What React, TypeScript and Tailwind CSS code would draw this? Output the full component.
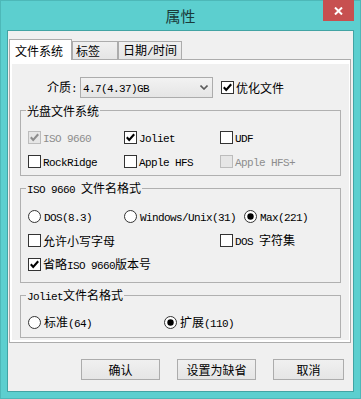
import React from 'react';

const CJK = "font-['Noto_Sans_CJK_SC',sans-serif] text-[12px]";
const MONO = "font-['Liberation_Mono',monospace] text-[11px] tracking-[-0.6px]";

function Txt({ s, className = '' }: { s: string; className?: string }) {
  const parts = s.split(/([\u4e00-\u9fff]+)/).filter(Boolean);
  return (
    <span className={'whitespace-pre leading-[14px] ' + className}>
      {parts.map((p, i) =>
        /[\u4e00-\u9fff]/.test(p) ? (
          <span key={i} className={CJK}>
            {p}
          </span>
        ) : (
          <span key={i} className={MONO}>
            {p}
          </span>
        )
      )}
    </span>
  );
}

function Box({ checked = false, disabled = false }: { checked?: boolean; disabled?: boolean }) {
  const border = disabled ? '#bcbcbc' : '#333333';
  const bg = disabled ? '#e6e6e6' : '#ffffff';
  const mark = disabled ? '#8d8d8d' : '#000000';
  return (
    <svg width="13" height="13" viewBox="0 0 13 13" className="shrink-0">
      <rect x="0.5" y="0.5" width="12" height="12" fill={bg} stroke={border} />
      {checked && <path d="M2.8 6.3 L5.2 8.9 L10.2 3.3" fill="none" stroke={mark} strokeWidth="2.1" />}
    </svg>
  );
}

function Radio({ checked = false }: { checked?: boolean }) {
  return (
    <svg width="13" height="13" viewBox="0 0 13 13" className="shrink-0">
      <circle cx="6.5" cy="6.5" r="6" fill="#ffffff" stroke="#333333" />
      {checked && <circle cx="6.5" cy="6.5" r="3.2" fill="#000000" />}
    </svg>
  );
}

function Check({ label, checked, disabled, w }: { label: string; checked?: boolean; disabled?: boolean; w: string }) {
  return (
    <div className={'flex items-center gap-[2px] ' + w}>
      <Box checked={checked} disabled={disabled} />
      <Txt s={label} className={disabled ? 'text-[#8d8d8d]' : 'text-black'} />
    </div>
  );
}

function Opt({ label, checked, w }: { label: string; checked?: boolean; w: string }) {
  return (
    <div className={'flex items-center gap-[3px] ' + w}>
      <Radio checked={checked} />
      <Txt s={label} className="text-black" />
    </div>
  );
}

function Btn({ label, w }: { label: string; w: string }) {
  return (
    <div
      className={
        'h-[21px] border border-[#acacac] bg-gradient-to-b from-[#f0f0f0] to-[#e5e5e5] flex items-center justify-center ' +
        w
      }
    >
      <Txt s={label} className="text-black" />
    </div>
  );
}

export default function App() {
  return (
    <div className="w-[361px] h-[399px] bg-[#5ccfcf] relative overflow-hidden shadow-[inset_0_0_0_1px_#4db8b8]">
      <div className="h-[30px] flex items-center justify-center">
        <span className="font-['Noto_Sans_CJK_SC',sans-serif] text-[15px] leading-none text-[#1a3a3a]">属性</span>
      </div>
      <div className="absolute top-0 right-[7px] w-[31px] h-[21px] bg-[#c75050] flex items-center justify-center">
        <svg width="9" height="8" viewBox="0 0 9 8">
          <path d="M1 0.5 L8 7.5 M8 0.5 L1 7.5" stroke="#ffffff" strokeWidth="2" />
        </svg>
      </div>

      <div className="mx-[7px] h-[362px] border border-[#42a4a4] bg-[#f0f0f0] flex flex-col">
        <div className="pt-[8px] pl-[1px] pr-[2px]">
          <div className="flex items-end h-[20px]">
            <div className="relative z-10 -mb-px h-[21px] w-[63px] border border-b-0 border-[#acacac] bg-white flex items-center pl-[5px]">
              <Txt s="文件系统" className="text-black" />
            </div>
            <div className="h-[18px] w-[46px] border border-b-0 border-[#acacac] bg-gradient-to-b from-[#f0f0f0] to-[#e5e5e5] flex items-center pl-[3px]">
              <Txt s="标签" className="text-black" />
            </div>
            <div className="h-[18px] w-[64px] border border-b-0 border-[#acacac] bg-gradient-to-b from-[#f0f0f0] to-[#e5e5e5] flex items-center pl-[4px]">
              <Txt s="日期/时间" className="text-black" />
            </div>
          </div>

          <div className="h-[284px] border border-[#acacac] bg-white pt-[4px] pl-[2px] pr-[1px] pb-[2px] flex flex-col">
            <div className="flex-1 bg-[#f0f0f0] flex flex-col">
              <div className="mt-[13px] h-[21px] flex items-center pl-[35px]">
                <Txt s="介质:" className="text-black w-[30px]" />
                <div className="ml-[3px] w-[133px] h-[21px] border border-[#acacac] bg-gradient-to-b from-[#f2f2f2] to-[#e5e5e5] flex items-center pl-[2px]">
                  <Txt s="4.7(4.37)GB" className="text-black" />
                  <svg width="8" height="5" viewBox="0 0 8 5" className="ml-auto mr-[4px]">
                    <path d="M0.5 0.5 L4 4 L7.5 0.5" fill="none" stroke="#5a5a5a" strokeWidth="1.6" />
                  </svg>
                </div>
                <div className="ml-[8px] flex items-center gap-[2px]">
                  <Box checked />
                  <Txt s="优化文件" className="text-black" />
                </div>
              </div>

              <fieldset className="mt-[5px] ml-[8px] w-[321px] border border-[#b0b0b0]">
                <legend className="ml-[5px] px-[1px] leading-[14px]">
                  <Txt s="光盘文件系统" className="text-black" />
                </legend>
                <div className="pt-[7px] pb-[2px] pl-[7px]">
                  <div className="flex h-[24px] items-center">
                    <Check label="ISO 9660" checked disabled w="w-[96px]" />
                    <Check label="Joliet" checked w="w-[96px]" />
                    <Check label="UDF" w="w-[96px]" />
                  </div>
                  <div className="flex h-[24px] items-center">
                    <Check label="RockRidge" w="w-[96px]" />
                    <Check label="Apple HFS" w="w-[96px]" />
                    <Check label="Apple HFS+" disabled w="w-[96px]" />
                  </div>
                </div>
              </fieldset>

              <fieldset className="mt-[4px] ml-[8px] w-[321px] border border-[#b0b0b0]">
                <legend className="ml-[5px] px-[1px] leading-[14px]">
                  <Txt s="ISO 9660 文件名格式" className="text-black" />
                </legend>
                <div className="pt-[7px] pb-[6px] pl-[7px]">
                  <div className="flex h-[24px] items-center">
                    <Opt label="DOS(8.3)" w="w-[96px]" />
                    <Opt label="Windows/Unix(31)" w="w-[120px]" />
                    <Opt label="Max(221)" checked w="w-[80px]" />
                  </div>
                  <div className="flex h-[24px] items-center">
                    <Check label="允许小写字母" w="w-[192px]" />
                    <Check label="DOS 字符集" w="w-[100px]" />
                  </div>
                  <div className="flex h-[24px] items-center">
                    <Check label="省略ISO 9660版本号" checked w="w-[200px]" />
                  </div>
                </div>
              </fieldset>

              <fieldset className="mt-[4px] ml-[8px] w-[321px] border border-[#b0b0b0]">
                <legend className="ml-[5px] px-[1px] leading-[14px]">
                  <Txt s="Joliet文件名格式" className="text-black" />
                </legend>
                <div className="pt-[6px] pb-[3px] pl-[7px]">
                  <div className="flex h-[24px] items-center">
                    <Opt label="标准(64)" w="w-[136px]" />
                    <Opt label="扩展(110)" checked w="w-[100px]" />
                  </div>
                </div>
              </fieldset>
            </div>
          </div>
        </div>

        <div className="mt-[16px] flex justify-end gap-[17px] pr-[9px]">
          <Btn label="确认" w="w-[79px]" />
          <Btn label="设置为缺省" w="w-[79px]" />
          <Btn label="取消" w="w-[71px]" />
        </div>
      </div>
    </div>
  );
}
